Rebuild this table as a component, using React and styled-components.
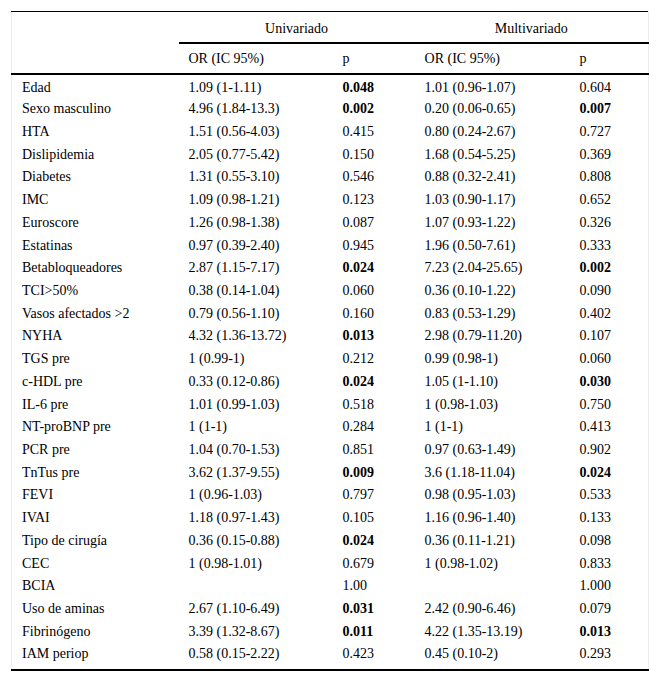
import React from "react";
import styled, { createGlobalStyle } from "styled-components";

const GlobalStyle = createGlobalStyle`
  body {
    margin: 0;
    background: #ffffff;
  }
`;

const rows = [
  ["Edad", "1.09 (1-1.11)", "0.048", true, "1.01 (0.96-1.07)", "0.604", false],
  ["Sexo masculino", "4.96 (1.84-13.3)", "0.002", true, "0.20 (0.06-0.65)", "0.007", true],
  ["HTA", "1.51 (0.56-4.03)", "0.415", false, "0.80 (0.24-2.67)", "0.727", false],
  ["Dislipidemia", "2.05 (0.77-5.42)", "0.150", false, "1.68 (0.54-5.25)", "0.369", false],
  ["Diabetes", "1.31 (0.55-3.10)", "0.546", false, "0.88 (0.32-2.41)", "0.808", false],
  ["IMC", "1.09 (0.98-1.21)", "0.123", false, "1.03 (0.90-1.17)", "0.652", false],
  ["Euroscore", "1.26 (0.98-1.38)", "0.087", false, "1.07 (0.93-1.22)", "0.326", false],
  ["Estatinas", "0.97 (0.39-2.40)", "0.945", false, "1.96 (0.50-7.61)", "0.333", false],
  ["Betabloqueadores", "2.87 (1.15-7.17)", "0.024", true, "7.23 (2.04-25.65)", "0.002", true],
  ["TCI>50%", "0.38 (0.14-1.04)", "0.060", false, "0.36 (0.10-1.22)", "0.090", false],
  ["Vasos afectados >2", "0.79 (0.56-1.10)", "0.160", false, "0.83 (0.53-1.29)", "0.402", false],
  ["NYHA", "4.32 (1.36-13.72)", "0.013", true, "2.98 (0.79-11.20)", "0.107", false],
  ["TGS pre", "1 (0.99-1)", "0.212", false, "0.99 (0.98-1)", "0.060", false],
  ["c-HDL pre", "0.33 (0.12-0.86)", "0.024", true, "1.05 (1-1.10)", "0.030", true],
  ["IL-6 pre", "1.01 (0.99-1.03)", "0.518", false, "1 (0.98-1.03)", "0.750", false],
  ["NT-proBNP pre", "1 (1-1)", "0.284", false, "1 (1-1)", "0.413", false],
  ["PCR pre", "1.04 (0.70-1.53)", "0.851", false, "0.97 (0.63-1.49)", "0.902", false],
  ["TnTus pre", "3.62 (1.37-9.55)", "0.009", true, "3.6 (1.18-11.04)", "0.024", true],
  ["FEVI", "1 (0.96-1.03)", "0.797", false, "0.98 (0.95-1.03)", "0.533", false],
  ["IVAI", "1.18 (0.97-1.43)", "0.105", false, "1.16 (0.96-1.40)", "0.133", false],
  ["Tipo de cirugía", "0.36 (0.15-0.88)", "0.024", true, "0.36 (0.11-1.21)", "0.098", false],
  ["CEC", "1 (0.98-1.01)", "0.679", false, "1 (0.98-1.02)", "0.833", false],
  ["BCIA", "", "1.00", false, "", "1.000", false],
  ["Uso de aminas", "2.67 (1.10-6.49)", "0.031", true, "2.42 (0.90-6.46)", "0.079", false],
  ["Fibrinógeno", "3.39 (1.32-8.67)", "0.011", true, "4.22 (1.35-13.19)", "0.013", true],
  ["IAM periop", "0.58 (0.15-2.22)", "0.423", false, "0.45 (0.10-2)", "0.293", false],
];

export default function App() {
  return (
    <>
      <GlobalStyle />
      <Wrapper>
        <Table>
          <colgroup>
            <col style={{ width: 167 }} />
            <col style={{ width: 154 }} />
            <col style={{ width: 82 }} />
            <col style={{ width: 155 }} />
            <col style={{ width: 79 }} />
          </colgroup>
          <thead>
            <GroupRow>
              <HeadCell />
              <GroupCell colSpan={2}>Univariado</GroupCell>
              <GroupCell colSpan={2}>Multivariado</GroupCell>
            </GroupRow>
            <SubRow>
              <HeadCell />
              <HeadCell>OR (IC 95%)</HeadCell>
              <HeadCell>p</HeadCell>
              <HeadCell>OR (IC 95%)</HeadCell>
              <HeadCell>p</HeadCell>
            </SubRow>
          </thead>
          <tbody>
            {rows.map(([label, or1, p1, b1, or2, p2, b2]) => (
              <Row key={label}>
                <Cell>{label}</Cell>
                <Cell>{or1}</Cell>
                <Cell $bold={b1}>{p1}</Cell>
                <Cell>{or2}</Cell>
                <Cell $bold={b2}>{p2}</Cell>
              </Row>
            ))}
          </tbody>
        </Table>
      </Wrapper>
    </>
  );
}

const Wrapper = styled.div`
  padding: 11px 11px 0 11px;
`;

const Table = styled.table`
  width: 637px;
  border-collapse: collapse;
  table-layout: fixed;
  font-family: "Liberation Serif", "Times New Roman", serif;
  font-size: 14px;
  line-height: 16px;
  color: #000;
  border-top: 1px solid #000;
  border-bottom: 2px solid #000;
  border-left: 1px solid #ececec;
  border-right: 1px solid #ececec;
`;

const GroupRow = styled.tr`
  height: 31px;
`;

const SubRow = styled.tr`
  height: 31px;
  border-bottom: 2px solid #000;
`;

const HeadCell = styled.th`
  font-weight: normal;
  text-align: left;
  padding: 2px 0 0 10px;
`;

const GroupCell = styled.th`
  font-weight: normal;
  text-align: center;
  padding: 4px 0 0 0;
  border-bottom: 2px solid #000;
`;

const Row = styled.tr`
  height: 22.72px;

  &:last-child {
    height: 29px;
  }
`;

const Cell = styled.td`
  padding: 5px 0 0 10px;
  vertical-align: top;
  font-weight: ${(p) => (p.$bold ? "bold" : "normal")};
  white-space: nowrap;
`;
